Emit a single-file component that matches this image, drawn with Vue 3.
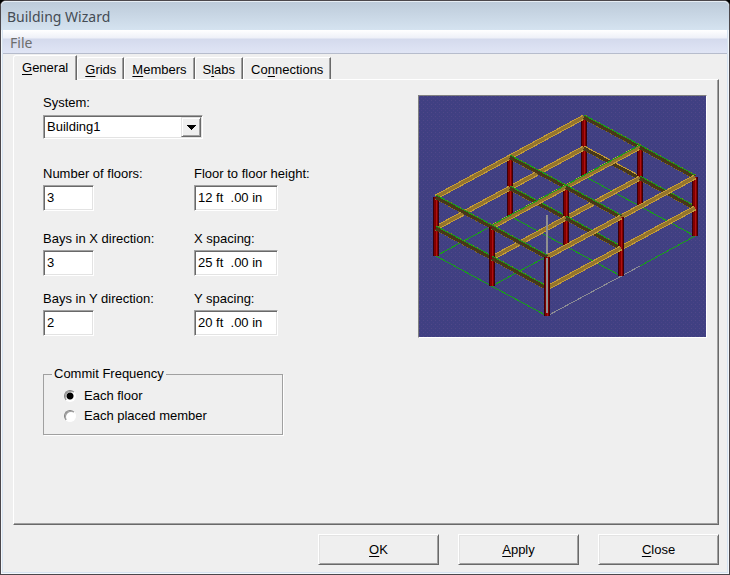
<template>
  <div class="window">
    <header class="title-bar">Building Wizard</header>
    <nav class="menu-bar">
      <button type="button" class="menu-item">File</button>
    </nav>

    <div class="body">
      <!-- tabs -->
      <div class="tabs" role="tablist">
        <button
          v-for="tab in tabs"
          :key="tab.id"
          type="button"
          role="tab"
          class="tab"
          :class="{ active: activeTab === tab.id }"
          :aria-selected="activeTab === tab.id"
          @click="activeTab = tab.id"
        >{{ tab.before }}<u>{{ tab.key }}</u>{{ tab.after }}</button>
      </div>

      <div class="panel" role="tabpanel">
        <div v-show="activeTab === 'general'" class="general">
          <form class="form" @submit.prevent>
            <div class="field system">
              <label for="system">System:</label>
              <div class="combo">
                <select id="system" v-model="system">
                  <option>Building1</option>
                </select>
                <span class="combo-arrow">
                  <svg width="10" height="5" viewBox="0 0 10 5" shape-rendering="crispEdges">
                    <path d="M0 0h10L5 5z" fill="#000" />
                  </svg>
                </span>
              </div>
            </div>

            <div v-for="row in rows" :key="row.id" class="row">
              <div class="field">
                <label :for="row.id + '-count'">{{ row.countLabel }}</label>
                <input :id="row.id + '-count'" v-model="row.count" type="text" class="count">
              </div>
              <div class="field">
                <label :for="row.id + '-size'">{{ row.sizeLabel }}</label>
                <input :id="row.id + '-size'" v-model="row.size" type="text" class="size">
              </div>
            </div>

            <fieldset class="group">
              <legend>Commit Frequency</legend>
              <label class="radio">
                <input v-model="commit" type="radio" name="commit" value="floor">
                Each floor
              </label>
              <label class="radio">
                <input v-model="commit" type="radio" name="commit" value="member">
                Each placed member
              </label>
            </fieldset>
          </form>

          <!-- building preview -->
          <div class="preview">
            <svg viewBox="0 0 287 241" shape-rendering="crispEdges" role="img" aria-label="Building frame">
              <defs>
                <pattern id="dots" width="4" height="4" patternUnits="userSpaceOnUse">
                  <rect width="4" height="4" fill="#404082" />
                  <rect width="1" height="1" fill="#504888" />
                  <rect x="2" y="2" width="1" height="1" fill="#4a4288" />
                </pattern>
              </defs>
              <rect width="287" height="241" fill="url(#dots)" />
              <path v-for="(d, i) in groundLines" :key="'g' + i" :d="d" class="ground" />
              <path d="M128 220L221 170" class="ground grey" />
              <g v-for="(part, i) in frame" :key="i">
                <template v-if="part.type === 'column'">
                  <path :d="part.d" class="column-dark" />
                  <path :d="part.d" class="column-red" />
                  <path :d="part.d" class="column-line" />
                </template>
                <template v-else-if="part.type === 'gold'">
                  <path :d="part.d" class="gold-edge" />
                  <path :d="part.d" class="gold" />
                  <path v-if="part.green" :d="part.d" class="green-top" />
                </template>
                <template v-else>
                  <path :d="part.d" class="brown-edge" />
                  <path :d="part.d" class="brown" />
                  <path :d="part.d" :class="part.green ? 'green-top' : 'gold-top'" />
                </template>
              </g>
              <path d="M128 119V158M128 162V217" class="axis" />
            </svg>
          </div>
        </div>
      </div>

      <footer class="actions">
        <button type="button" class="action"><u>O</u>K</button>
        <button type="button" class="action"><u>A</u>pply</button>
        <button type="button" class="action"><u>C</u>lose</button>
      </footer>
    </div>
  </div>
</template>

<script setup>
import { ref } from 'vue';

const tabs = [
  { id: 'general', before: '', key: 'G', after: 'eneral' },
  { id: 'grids', before: '', key: 'G', after: 'rids' },
  { id: 'members', before: '', key: 'M', after: 'embers' },
  { id: 'slabs', before: 'S', key: 'l', after: 'abs' },
  { id: 'connections', before: 'Co', key: 'n', after: 'nections' }
];
const activeTab = ref('general');

const system = ref('Building1');
const commit = ref('floor');
const rows = ref([
  { id: 'floors', countLabel: 'Number of floors:', count: '3', sizeLabel: 'Floor to floor height:', size: '12 ft  .00 in' },
  { id: 'bays-x', countLabel: 'Bays in X direction:', count: '3', sizeLabel: 'X spacing:', size: '25 ft  .00 in' },
  { id: 'bays-y', countLabel: 'Bays in Y direction:', count: '2', sizeLabel: 'Y spacing:', size: '20 ft  .00 in' }
]);

// isometric frame: i runs to the back right, j to the front right, h is the drop from the roof
const MID = 31;
const BASE = 59;
const node = (i, j, h) => [
  Math.round(17 + i * 74 + j * 55.5),
  101 - i * 40 + j * 30 + h
];
const line = (a, b) => `M${a[0]} ${a[1]}L${b[0]} ${b[1]}`;

const groundLines = [
  ...[0, 1, 2].map((i) => line(node(i, 0, BASE), node(i, 2, BASE))),
  ...[0, 1].map((j) => line(node(0, j, BASE), node(2, j, BASE))),
  line([221, 170], node(2, 2, BASE))
];

// drawn from the back corner to the front corner
const frame = [];
for (let depth = 4; depth >= 0; depth--) {
  for (let i = 2; i >= 0; i--) {
    const j = 2 - (depth - i);
    if (j < 0 || j > 2) continue;
    frame.push({ type: 'column', d: line(node(i, j, 0), node(i, j, BASE)) });
    for (const h of [MID, 0]) {
      if (i > 0) {
        frame.push({ type: 'gold', green: j === 1 && h === 0, d: line(node(i, j, h), node(i - 1, j, h)) });
      }
      if (j < 2) {
        frame.push({ type: 'brown', green: !(i === 2 && j === 0 && h === MID), d: line(node(i, j, h), node(i, j + 1, h)) });
      }
    }
  }
}
</script>

<style>
body {
  margin: 0;
  background: #000;
}
</style>

<style scoped>
.window {
  box-sizing: border-box;
  display: flex;
  flex-direction: column;
  min-height: 100vh;
  border: 1px solid #4b474b;
  border-radius: 6px 6px 0 0;
  background: #efefef;
  box-shadow: inset 0 0 0 1px #f4f8fc, inset 0 0 0 2px #d6e3f1;
  color: #000;
  font-family: "Liberation Sans", Arial, sans-serif;
  font-size: 13px;
  line-height: 16px;
}

.title-bar {
  height: 29px;
  padding-left: 6px;
  border-radius: 5px 5px 0 0;
  background: linear-gradient(#bccad9, #d5e3f0);
  box-shadow: inset 0 1px #e6edf4;
  color: #454c54;
  font-family: "Noto Sans", sans-serif;
  font-size: 14px;
  line-height: 31px;
}

.menu-bar {
  height: 23px;
  margin: 0 2px;
  border-bottom: 1px solid #b6bccc;
  background: linear-gradient(#fff 0, #eef0f8 8px, #d4daed 9px, #e0e5f5 100%);
}

.menu-item {
  padding: 0 7px;
  border: 0;
  background: none;
  color: #6d6d6d;
  font-family: "Noto Sans", sans-serif;
  font-size: 14px;
  line-height: 25px;
}

.body {
  display: flex;
  flex: 1;
  flex-direction: column;
  padding: 1px 10px 9px 12px;
}

/* tabs */
.tabs {
  display: flex;
  align-items: flex-end;
  height: 24px;
}

.tab {
  height: 22px;
  padding: 2px 7px 0;
  border: 0;
  border-top: 1px solid #fff;
  border-left: 1px solid #fff;
  border-right: 1px solid #696969;
  border-radius: 3px 0 0 0;
  background: #efefef;
  box-shadow: inset -1px 0 #a0a0a0;
  color: #000;
  font: inherit;
}

.tab.active {
  position: relative;
  height: 25px;
  margin-bottom: -1px;
  padding: 0 8px 1px;
}

.panel {
  flex: 1;
  padding: 15px 11px 20px 29px;
  border: 1px solid;
  border-color: #fff #696969 #696969 #fff;
  box-shadow: inset -1px -1px #a0a0a0;
}

.general {
  display: flex;
  justify-content: space-between;
  align-items: flex-start;
  gap: 20px;
}

.field {
  display: flex;
  flex-direction: column;
  align-items: flex-start;
  gap: 3px;
}

.system {
  gap: 4px;
  margin-bottom: 27px;
}

.row {
  display: grid;
  grid-template-columns: 151px auto;
  justify-content: start;
  margin-bottom: 15px;
}

.system + .row {
  margin-bottom: 20px;
}

input[type="text"],
select,
.preview {
  box-sizing: border-box;
  border: 1px solid;
  border-color: #a0a0a0 #fff #fff #a0a0a0;
  border-radius: 0;
  background: #fff;
  box-shadow: inset 1px 1px #696969, inset -1px -1px #e3e3e3;
  color: #000;
  font: inherit;
}

input[type="text"] {
  height: 26px;
  padding: 0 3px 2px;
}

.count {
  width: 51px;
}

.size {
  width: 84px;
}

.combo {
  position: relative;
}

select {
  display: block;
  width: 160px;
  height: 24px;
  padding: 0 24px 0 3px;
  appearance: none;
}

.combo-arrow {
  position: absolute;
  top: 2px;
  right: 2px;
  bottom: 2px;
  display: flex;
  align-items: center;
  justify-content: center;
  box-sizing: border-box;
  width: 20px;
  border: 1px solid;
  border-color: #e3e3e3 #696969 #696969 #e3e3e3;
  background: #efefef;
  box-shadow: inset 1px 1px #fff, inset -1px -1px #a0a0a0;
  pointer-events: none;
}

/* radio group */
.group {
  box-sizing: border-box;
  width: 240px;
  margin: 30px 0 0;
  padding: 4px 20px 8px;
  border: 1px solid #a0a0a0;
  box-shadow: 1px 1px #fff;
}

.group legend {
  margin-left: -12px;
  padding: 0 2px;
}

.radio {
  display: flex;
  align-items: center;
  gap: 8px;
  height: 20px;
}

.radio input {
  width: 12px;
  height: 12px;
  margin: 0;
  border: 1px solid;
  border-color: #808080 #fff #fff #808080;
  border-radius: 50%;
  background: #fff;
  box-shadow: inset 1px 1px #a0a0a0;
  appearance: none;
}

.radio input:checked {
  background: radial-gradient(circle, #000 3px, #fff 4px);
}

/* preview */
.preview {
  flex: 0 1 289px;
  border-color: #808080 #fff #fff #808080;
}

.preview svg {
  display: block;
  width: 100%;
  height: auto;
}

.preview path {
  fill: none;
}

.ground {
  stroke: #18a018;
  stroke-width: 1;
}

.preview .grey {
  stroke: #8c8c94;
}

.axis {
  stroke: #909090;
  stroke-width: 2;
}

.column-dark {
  stroke: #3c0008;
  stroke-width: 6;
}

.column-red {
  stroke: #800000;
  stroke-width: 4;
}

.column-line {
  stroke: #b01010;
  stroke-width: 1;
}

.gold-edge {
  stroke: #c49c38;
  stroke-width: 5;
}

.gold {
  stroke: #94742c;
  stroke-width: 3;
}

.brown-edge {
  stroke: #8c6c24;
  stroke-width: 5;
  stroke-dasharray: 3 2;
}

.brown {
  stroke: #483818;
  stroke-width: 4;
}

.green-top,
.gold-top {
  stroke: #18a018;
  stroke-width: 1;
  transform: translateY(-2px);
}

.gold-top {
  stroke: #c49c38;
}

/* bottom buttons */
.actions {
  display: flex;
  justify-content: flex-end;
  gap: 19px;
  margin-top: 9px;
}

.action {
  width: 121px;
  height: 31px;
  border: 1px solid;
  border-color: #fff #696969 #696969 #fff;
  background: #efefef;
  box-shadow: inset 1px 1px #e3e3e3, inset -1px -1px #a0a0a0;
  color: #000;
  font: inherit;
}

u {
  text-underline-offset: 2px;
}
</style>
